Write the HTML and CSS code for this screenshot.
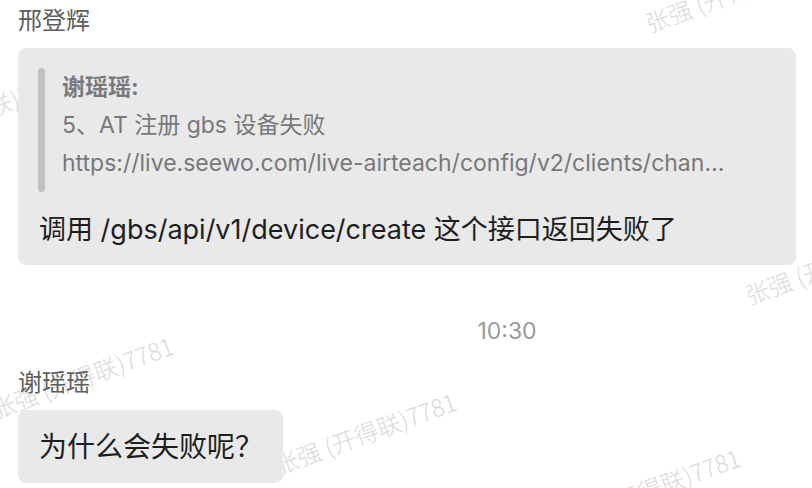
FILE: index.html
```html
<!DOCTYPE html>
<html lang="zh-CN">
<head>
<meta charset="utf-8">
<title>chat</title>
<link rel="stylesheet" href="styles.css">
</head>
<body>
<div class="page">
  <div class="watermarks" aria-hidden="true">
    <span class="wm wm1">张强 (开得联)7781</span>
    <span class="wm wm2">张强 (开得联)7781</span>
    <span class="wm wm3">张强 (开得联)7781</span>
    <span class="wm wm4">张强 (开得联)7781</span>
    <span class="wm wm5">张强 (开得联)7781</span>
    <span class="wm wm6">张强 (开得联)7781</span>
  </div>
  <div class="chat">
    <div class="msg">
      <div class="name">邢登辉</div>
      <div class="bubble bubble-wide">
        <div class="quote">
          <div class="quote-bar"></div>
          <div class="quote-body">
            <div class="quote-author">谢瑶瑶:</div>
            <div class="quote-line">5、AT 注册 gbs 设备失败</div>
            <div class="quote-line quote-url">https://live.seewo.com/live-airteach/config/v2/clients/channel/device/create/register</div>
          </div>
        </div>
        <div class="text text-after-quote">调用 /gbs/api/v1/device/create 这个接口返回失败了</div>
      </div>
    </div>
    <div class="time">10:30</div>
    <div class="msg msg-after-time">
      <div class="name">谢瑶瑶</div>
      <div class="bubble bubble-short">
        <div class="text text-short">为什么会失败呢？</div>
      </div>
    </div>
  </div>
</div>
</body>
</html>
```
FILE: styles.css
```css
* { box-sizing: border-box; }
html, body { margin: 0; padding: 0; background: #ffffff; }
body {
  font-family: Inter, "Noto Sans CJK SC", sans-serif;
  width: 812px;
  height: 488px;
  overflow: hidden;
}
.page { position: relative; width: 812px; height: 488px; overflow: hidden; }

.watermarks { position: absolute; left: 0; top: 0; width: 812px; height: 488px; z-index: 0; }
.wm {
  position: absolute;
  font-family: "Noto Sans CJK SC", sans-serif;
  font-weight: 300;
  font-size: 24px;
  line-height: 24px;
  color: #dadada;
  white-space: nowrap;
  transform: rotate(-20deg);
  transform-origin: left bottom;
}
.wm1 { left: 650px; top: 11px; }
.wm2 { left: -110px; top: 132px; }
.wm3 { left: 750px; top: 283px; }
.wm4 { left: -4px; top: 397px; }
.wm5 { left: 279px; top: 453px; }
.wm6 { left: 563px; top: 509px; }

.chat {
  position: relative;
  z-index: 1;
  display: flex;
  flex-direction: column;
  align-items: flex-start;
  padding: 5px 16px 0 18px;
}
.msg { display: flex; flex-direction: column; align-items: flex-start; width: 100%; }
.name {
  font-size: 24px;
  line-height: 32px;
  color: #5e5e5e;
}
.bubble {
  background: #e9e9e9;
  border-radius: 8px;
  margin-top: 11px;
}
.bubble-wide { width: 778px; padding: 20px 21px 17px 21px; }
.bubble-short { padding: 19px 20px 18px 21px; }
.quote { display: flex; gap: 17px; margin-left: -1px; }
.quote-bar { width: 7px; flex: none; background: #c1c1c1; border-radius: 3px; }
.quote-body {
  min-width: 0;
  flex: 1;
  padding-bottom: 10px;
  font-size: 23px;
  line-height: 38px;
  color: #78787c;
}
.quote-author { font-weight: 700; color: #7a7a7e; }
.quote-url {
  white-space: nowrap;
  overflow: hidden;
  text-overflow: ellipsis;
  max-width: 668px;
}
.text {
  font-size: 27px;
  line-height: 36px;
  color: #1e1e1e;
}
.text-short { font-size: 28px; }
.text-after-quote { margin-top: 20px; }

.time {
  align-self: stretch;
  text-align: center;
  padding-left: 200px;
  margin-top: 51px;
  font-size: 23px;
  line-height: 30px;
  color: #9a9a9a;
}
.msg-after-time { margin-top: 21px; }
```
